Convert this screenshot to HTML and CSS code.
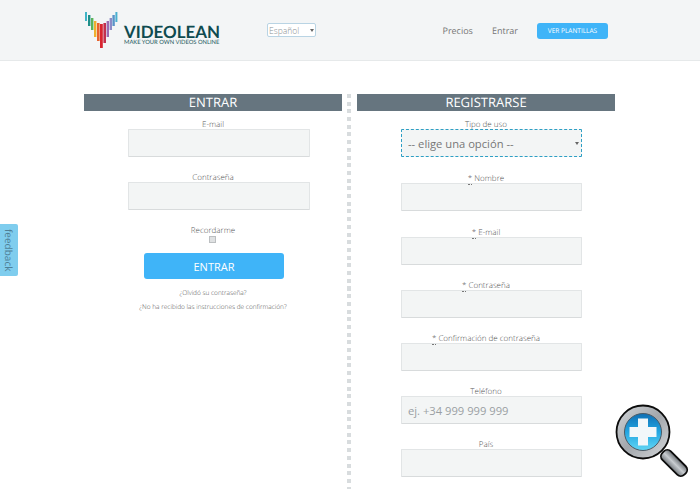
FILE: index.html
```html
<!doctype html>
<html>
    <head>
        <meta charset="utf-8">
        <title>Videolean</title>
        <link rel="stylesheet" href="styles.css">
    </head>
    <body>
        <header class="topbar">
            <div class="topbar-inner">
                <a class="logo" href="#">
                    <svg class="logo-mark" width="36" height="38" viewBox="0 0 36 38">
                        <!-- fan of coloured bars -->
                        <rect x="1" y="1" width="2" height="9" fill="#3fb3c6"/>
                        <rect x="4" y="4" width="2.4" height="11" fill="#1f8f8a"/>
                        <rect x="7" y="7" width="2.4" height="12" fill="#58b45a"/>
                        <rect x="10" y="10" width="2.4" height="16" fill="#efb02f"/>
                        <rect x="13" y="12" width="2.6" height="18" fill="#e8622c"/>
                        <rect x="16" y="13" width="2.8" height="24" fill="#d8242f"/>
                        <rect x="19.4" y="12" width="2.6" height="20" fill="#c22f4e"/>
                        <rect x="22.6" y="10" width="2.4" height="16" fill="#9a6bb2"/>
                        <rect x="25.6" y="7" width="2.4" height="12" fill="#8c8ac6"/>
                        <rect x="28.4" y="4" width="2.4" height="11" fill="#5a93c8"/>
                        <rect x="31.4" y="1" width="2" height="10" fill="#49b0d0"/>
                    </svg>
                    <span class="logo-text">
                        <span class="logo-name">VIDEOLEAN</span>
                        <span class="logo-tag">MAKE YOUR OWN VIDEOS ONLINE</span>
                    </span>
                </a>
                <span class="select-wrap lang-wrap">
                    <select class="lang">
                        <option>Español</option>
                    </select>
                </span>
                <nav class="nav">
                    <a href="#">Precios</a>
                    <a href="#">Entrar</a>
                    <a class="nav-btn" href="#">VER PLANTILLAS</a>
                </nav>
            </div>
        </header>

        <main class="columns">
            <section class="col">
                <h2>ENTRAR</h2>
                <form class="form" onsubmit="return false;">
                    <div class="field">
                        <label>E-mail</label>
                        <input type="text">
                    </div>
                    <div class="field">
                        <label>Contraseña</label>
                        <input type="password">
                    </div>
                    <div class="remember">
                        <label>Recordarme</label>
                        <input type="checkbox">
                    </div>
                    <button class="submit">ENTRAR</button>
                    <a class="small-link" href="#">¿Olvidó su contraseña?</a>
                    <a class="small-link" href="#">¿No ha recibido las instrucciones de confirmación?</a>
                </form>
            </section>

            <div class="divider"></div>

            <section class="col">
                <h2>REGISTRARSE</h2>
                <form class="form form-wide" onsubmit="return false;">
                    <div class="field field-tall">
                        <label>Tipo de uso</label>
                        <span class="select-wrap use-wrap">
                            <select class="use-select">
                                <option>-- elige una opción --</option>
                            </select>
                        </span>
                    </div>
                    <div class="field field-tall">
                        <label><abbr>*</abbr> Nombre</label>
                        <input type="text">
                    </div>
                    <div class="field">
                        <label><abbr>*</abbr> E-mail</label>
                        <input type="text">
                    </div>
                    <div class="field">
                        <label><abbr>*</abbr> Contraseña</label>
                        <input type="password">
                    </div>
                    <div class="field">
                        <label><abbr>*</abbr> Confirmación de contraseña</label>
                        <input type="password">
                    </div>
                    <div class="field">
                        <label>Teléfono</label>
                        <input type="text" placeholder="ej. +34 999 999 999">
                    </div>
                    <div class="field">
                        <label>País</label>
                        <input type="text">
                    </div>
                </form>
            </section>
        </main>

        <a class="feedback" href="#">feedback</a>

        <svg class="zoom-icon" width="74" height="74" viewBox="0 0 74 74">
            <defs>
                <linearGradient id="ringFill" x1="0" y1="0" x2="1" y2="1">
                    <stop offset="0" stop-color="#d4d7da"/>
                    <stop offset="0.5" stop-color="#a2a6ab"/>
                    <stop offset="1" stop-color="#d8dbde"/>
                </linearGradient>
                <linearGradient id="handleFill" x1="0" y1="0" x2="1" y2="0">
                    <stop offset="0" stop-color="#70757a"/>
                    <stop offset="0.5" stop-color="#c8ccd0"/>
                    <stop offset="1" stop-color="#6a6f74"/>
                </linearGradient>
                <linearGradient id="lensFill" x1="0" y1="0" x2="0" y2="1">
                    <stop offset="0" stop-color="#0f6fb4"/>
                    <stop offset="0.5" stop-color="#23a6e2"/>
                    <stop offset="1" stop-color="#62d6f4"/>
                </linearGradient>
            </defs>
            <g transform="rotate(-45 58 58)">
                <rect x="52" y="44" width="12" height="31" rx="5" fill="url(#handleFill)" stroke="#0c0c0c" stroke-width="1.8"/>
            </g>
            <circle cx="28" cy="28" r="26.5" fill="url(#ringFill)" stroke="#0c0c0c" stroke-width="1.8"/>
            <circle cx="28" cy="28" r="18.5" fill="url(#lensFill)" stroke="#4a5a66" stroke-width="1"/>
            <path d="M23 14.5h10v8.500h8.500v10H33v8.500H23V33h-8.500V23H23z" fill="#f2f7fa"/>
        </svg>
    </body>
</html>
```

FILE: styles.css
```css
html, body {
    height: 100%;
    overflow: hidden;
}
body {
    margin: 0;
    background: #fff;
    color: #666;
    font-family: "Open Sans", sans-serif;
    text-rendering: geometricPrecision;
}
a {
    color: inherit;
    text-decoration: none;
}

/* top bar */
.topbar {
    height: 60px;
    background: #f3f5f6;
    border-bottom: 1px solid #e6e9ea;
}
.topbar-inner {
    width: 531px;
    height: 60px;
    margin-left: 84px;
    display: flex;
    align-items: center;
}
.logo {
    display: flex;
    align-items: flex-start;
    width: 183px;
    height: 38px;
}
.logo-mark {
    flex: none;
    margin-right: 4px;
}
.logo-text {
    display: flex;
    flex-direction: column;
    padding-top: 13px;
}
.logo-name {
    font-family: "Lato", sans-serif;
    font-size: 16.9px;
    line-height: 15px;
    font-weight: 700;
    color: #0f4b50;
}
.logo-tag {
    font-family: "Lato", sans-serif;
    font-size: 5.8px;
    line-height: 7px;
    font-weight: 400;
    white-space: nowrap;
    color: #1f5a5e;
}
.select-wrap {
    position: relative;
    display: block;
}
.select-wrap::after {
    content: "";
    position: absolute;
    top: 50%;
    margin-top: -1px;
    border: 2px solid transparent;
    border-top: 3px solid #666;
    border-bottom: 0;
}
.lang-wrap {
    width: 49px;
}
.lang-wrap::after {
    right: 2px;
}
.use-wrap::after {
    right: 3px;
}
.lang {
    display: block;
    width: 49px;
    height: 14px;
    padding: 0 1px;
    appearance: none;
    background: #fff;
    border: 1px solid #b9d4e4;
    border-radius: 2px;
    font-family: "Open Sans", sans-serif;
    font-size: 8.5px;
    font-weight: 300;
    color: #8a9094;
}
.nav {
    display: flex;
    align-items: center;
    margin-left: auto;
    margin-right: 7px;
    margin-top: 1px;
    font-size: 9px;
    color: #777;
}
.nav a {
    margin-left: 19px;
}
.nav .nav-btn {
    width: 71px;
    line-height: 16px;
    text-align: center;
    background: #3fb4f8;
    border-radius: 3px;
    font-size: 6.5px;
    color: #fff;
}

/* two columns */
.columns {
    display: flex;
    width: 531px;
    margin: 33px 0 0 84px;
}
.col {
    width: 258px;
    flex: none;
}
.col h2 {
    margin: 0 0 6px;
    height: 17px;
    line-height: 17px;
    background: #66757f;
    color: #fff;
    font-size: 13px;
    font-weight: 400;
    text-align: center;
}
.divider {
    width: 4px;
    height: 400px;
    margin-left: 5px;
    background: repeating-linear-gradient(#d8dcde 0, #d8dcde 4px, transparent 4px, transparent 7.7px);
}
.divider + .col {
    margin-left: 6px;
}

/* forms */
.form {
    display: flex;
    flex-direction: column;
    align-items: center;
}
.field {
    width: 100%;
    margin-bottom: 13px;
    text-align: center;
}
.field-tall {
    margin-bottom: 14px;
}
.field label {
    display: block;
    height: 12px;
    line-height: 16px;
    font-size: 8px;
    font-weight: 300;
    color: #555;
}
.field abbr {
    border-bottom: 1px dotted #777;
    font-size: 8px;
}
.field input,
.use-wrap {
    display: block;
    box-sizing: border-box;
    width: 182px;
    height: 28px;
    margin-left: 44px;
}
.form-wide .field input,
.form-wide .use-wrap {
    width: 181px;
}
.field input,
.use-select {
    padding: 0 6px;
    background: #f3f5f5;
    border: 1px solid #e2e5e6;
    border-bottom-color: #d8dbdc;
    border-radius: 1px;
    font-family: "Open Sans", sans-serif;
    font-size: 11.2px;
    color: #777;
}
.field input::placeholder {
    color: #9a9fa3;
    opacity: 1;
}
.use-select {
    display: block;
    box-sizing: border-box;
    width: 100%;
    height: 28px;
    appearance: none;
    border: 1px dashed #2e9fc4;
    outline: 0;
}
.remember {
    text-align: center;
    margin-top: 1px;
}
.remember label {
    display: block;
    height: 12px;
    line-height: 14px;
    font-size: 8px;
    font-weight: 300;
    color: #555;
}
.remember input {
    display: block;
    box-sizing: border-box;
    width: 7px;
    height: 7px;
    margin: 0 auto;
    appearance: none;
    background: #dfe1e2;
    border: 1px solid #bcbfc1;
}
.submit {
    width: 140px;
    height: 26px;
    margin: 10px 0 0 2px;
    background: #3fb4f8;
    border: 0;
    border-radius: 3px;
    font-family: "Open Sans", sans-serif;
    font-size: 11px;
    color: #fff;
    cursor: pointer;
}
.small-link {
    margin-top: 5px;
    line-height: 9px;
    font-size: 6.5px;
    font-weight: 300;
    white-space: nowrap;
    color: #555;
}
.submit + .small-link {
    margin-top: 9px;
}

/* things lying over the page */
.feedback {
    position: fixed;
    left: 0;
    top: 224px;
    width: 18px;
    height: 52px;
    display: flex;
    align-items: center;
    justify-content: center;
    writing-mode: vertical-rl;
    background: #7fcdee;
    border-radius: 0 2px 2px 0;
    font-size: 10px;
    color: #4f7f96;
}
.zoom-icon {
    position: fixed;
    left: 615px;
    top: 404px;
}
```
